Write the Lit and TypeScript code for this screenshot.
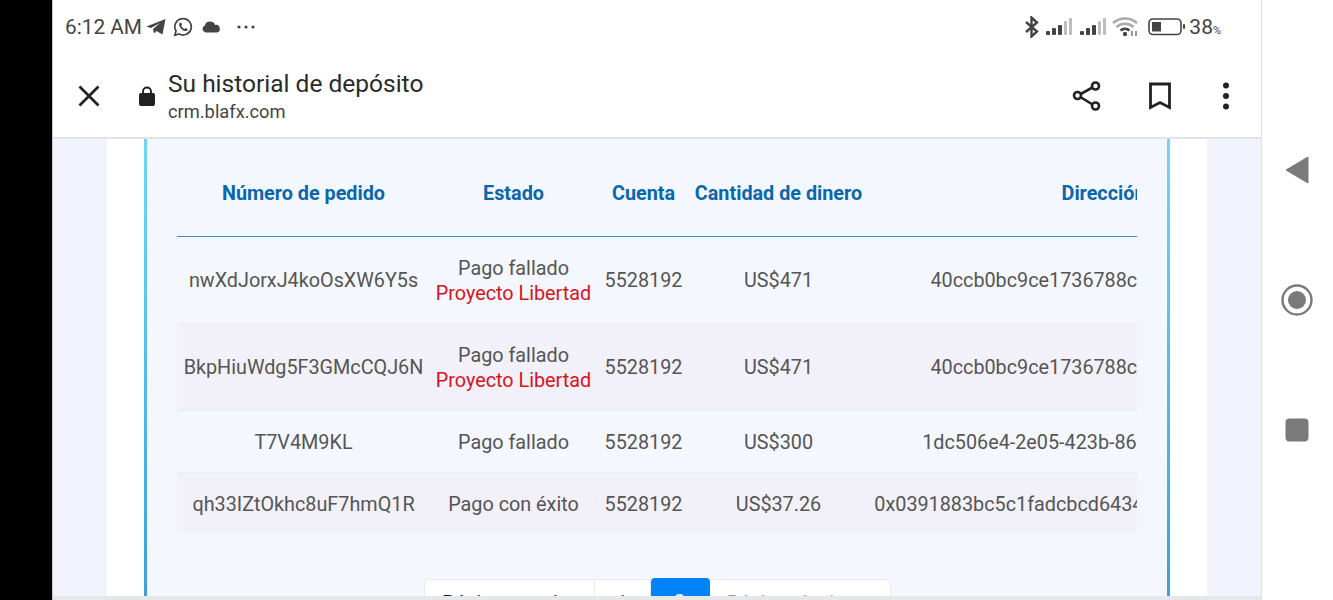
import { LitElement, html, css, svg } from "lit";
import { customElement } from "lit/decorators.js";

const rows = [
  { id: "nwXdJorxJ4koOsXW6Y5s", status: "Pago fallado", note: "Proyecto Libertad", account: "5528192", amount: "US$471", address: "40ccb0bc9ce1736788cfa91e4d27b352", tall: true },
  { id: "BkpHiuWdg5F3GMcCQJ6N", status: "Pago fallado", note: "Proyecto Libertad", account: "5528192", amount: "US$471", address: "40ccb0bc9ce1736788cfa91e4d27b352", tall: true },
  { id: "T7V4M9KL", status: "Pago fallado", note: "", account: "5528192", amount: "US$300", address: "1dc506e4-2e05-423b-86a1-7f3f9d20f5b4", tall: false },
  { id: "qh33IZtOkhc8uF7hmQ1R", status: "Pago con éxito", note: "", account: "5528192", amount: "US$37.26", address: "0x0391883bc5c1fadcbcd64343e7a2f19c05d8b6e1f", tall: false },
];

const bars = () => svg`
  <svg width="28" height="20" viewBox="0 0 28 20">
    <rect x="0" y="14" width="4" height="4" rx="1" fill="#444"/>
    <rect x="6" y="11" width="4" height="7" rx="1" fill="#444"/>
    <rect x="12" y="8" width="4" height="10" rx="1" fill="#444"/>
    <rect x="18" y="4" width="3" height="14" rx="1" fill="#bdbdbd"/>
    <rect x="23" y="1" width="3" height="17" rx="1" fill="#bdbdbd"/>
  </svg>`;

@customElement("app-root")
export class AppRoot extends LitElement {
  static styles = css`
    :host {
      display: flex;
      width: 1333px;
      height: 600px;
      overflow: hidden;
      background: #fff;
      font-family: Roboto, "Liberation Sans", sans-serif;
    }
    .bezel {
      width: 52px;
      background: #000;
      flex: none;
    }
    .phone {
      flex: none;
      display: flex;
      flex-direction: column;
      border-right: 1px solid #dfe1e4;
      border-left: 1px solid #c9c9c9;
      box-sizing: border-box;
      width: 1210px;
    }
    .status {
      height: 54px;
      flex: none;
      display: flex;
      align-items: center;
      padding: 0 0 0 12px;
      color: #444;
    }
    .time {
      font-size: 20.8px;
      margin-right: 4px;
    }
    .status svg {
      display: block;
      flex: none;
    }
    .whatsapp {
      margin-left: 7px;
    }
    .cloud {
      margin-left: 8px;
    }
    .dots {
      margin-left: 14px;
    }
    .right {
      margin-left: auto;
      display: flex;
      align-items: center;
      gap: 4px;
      padding-right: 40px;
    }
    .bt {
      margin-right: 2px;
    }
    .signals {
      display: flex;
      gap: 6px;
    }
    .battery {
      margin-left: 4px;
    }
    .pct {
      font-size: 21px;
      display: flex;
      align-items: baseline;
      margin-left: -1px;
    }
    .pct small {
      font-size: 11px;
    }
    .toolbar {
      height: 85px;
      flex: none;
      box-sizing: border-box;
      border-bottom: 2px solid #e2e3e6;
      display: flex;
      align-items: center;
      padding: 0 31px 0 24px;
      color: #222;
    }
    .close {
      margin-right: 37px;
    }
    .title-box {
      margin-left: 12px;
      display: flex;
      flex-direction: column;
      padding-top: 3px;
    }
    .title {
      font-size: 24.5px;
      line-height: 30px;
      color: #2b2b2b;
    }
    .url {
      font-size: 18.3px;
      line-height: 26px;
      color: #444;
    }
    .actions {
      margin-left: auto;
      display: flex;
      align-items: center;
      gap: 46px;
    }
    .bookmark {
      margin-right: 4px;
    }
    .content {
      flex: 1;
      min-height: 0;
      background: #f1f4fd;
      padding: 0 54px;
      overflow: hidden;
      border-bottom: 4px solid #e6e7e8;
    }
    .panel {
      background: #fff;
      height: 100%;
      padding: 0 37px;
      overflow: hidden;
    }
    .card {
      height: 100%;
      box-sizing: border-box;
      background: #f4f8fe;
      border-left: 3px solid;
      border-right: 3px solid;
      border-image: linear-gradient(180deg, #70d8ef, #3f9fdc) 1;
      padding: 11px 30px 0;
      overflow: hidden;
    }
    .scroll {
      width: 960px;
      overflow: hidden;
    }
    table {
      width: 1163px;
      table-layout: fixed;
      border-collapse: collapse;
      font-size: 19.8px;
      color: #555;
      text-align: center;
    }
    .c-id {
      width: 253px;
    }
    .c-status {
      width: 167px;
    }
    .c-account {
      width: 93px;
    }
    .c-amount {
      width: 177px;
    }
    .c-address {
      width: 473px;
    }
    th {
      height: 86px;
      box-sizing: border-box;
      padding: 2px 0 0;
      font-weight: 700;
      color: #0a66ad;
      border-bottom: 1px solid #3f8cb0;
    }
    td {
      box-sizing: border-box;
      padding: 4px 0 0;
      white-space: nowrap;
      overflow: hidden;
      line-height: 24.5px;
    }
    tr.tall td {
      height: 87px;
    }
    tr.short td {
      height: 62px;
    }
    tbody tr {
      border-bottom: 1px solid #e9ecf3;
    }
    tbody tr.short:last-child {
      border-bottom: 0;
    }
    tbody tr.short:last-child td {
      height: 61px;
    }
    tbody tr:nth-child(even) {
      background: #f2f0f9;
    }
    .note {
      color: #d8131d;
    }
    .pager {
      display: flex;
      justify-content: center;
      margin: 46px 0 0;
      font-size: 19.8px;
    }
    .pager span {
      height: 50px;
      box-sizing: border-box;
      display: flex;
      justify-content: center;
      padding-top: 12px;
      background: #fff;
      border: 1px solid #e8eaed;
      border-left-width: 0;
      color: #222;
    }
    .pager span:first-child {
      border-left-width: 1px;
      border-radius: 4px 0 0 4px;
      width: 171px;
    }
    .pager .num {
      width: 56px;
    }
    .pager .active {
      width: 59px;
      margin-top: -1px;
      height: 51px;
      background: #0082f8;
      border-color: #0082f8;
      border-radius: 4px;
      color: #fff;
    }
    .pager .next {
      width: 181px;
      color: #999;
      border-radius: 0 4px 4px 0;
    }
    .nav {
      flex: 1;
      background: #fff;
      display: flex;
      flex-direction: column;
      align-items: center;
      padding: 156px 2px 0 0;
      box-sizing: border-box;
    }
    .nav svg {
      display: block;
    }
    .nav .home {
      margin-top: 100px;
    }
    .nav .recent {
      margin-top: 102px;
    }
  `;

  render() {
    return html`
      <div class="bezel"></div>
      <div class="phone">
        <div class="status">
          <span class="time">6:12 AM</span>
          <svg width="20" height="18" viewBox="0 0 20 18">
            <path d="M19.5 1 L16.5 16.5 L10.5 13 L8 15.5 L7 11 L14 5 L5 10 L0.5 8.5 Z" fill="#444"/>
          </svg>
          <svg class="whatsapp" width="20" height="20" viewBox="0 0 20 20">
            <path d="M10 1.6 A8.2 8.2 0 0 0 3 14 L1.8 18.2 L6.2 17 A8.2 8.2 0 1 0 10 1.6 Z" fill="none" stroke="#444" stroke-width="1.7"/>
            <path d="M7 5.8 C5.8 7 5.9 9 7.5 11 C9.3 13.3 11.5 14.5 13.2 14 C14.3 13.7 14.8 12.8 14.7 12 L12.6 11 L11.6 12 C10.2 11.5 8.9 10.2 8.2 8.7 L9.1 7.7 L8.2 5.6 Z" fill="#444"/>
          </svg>
          <svg class="cloud" width="20" height="14" viewBox="0 0 20 14">
            <path d="M4.5 12.5 A3.6 3.6 0 0 1 3.8 5.6 A5.5 5.5 0 0 1 14.2 5 A3.8 3.8 0 0 1 15.8 12.5 Z" fill="#444"/>
          </svg>
          <svg class="dots" width="22" height="6" viewBox="0 0 22 6">
            <circle cx="4" cy="3" r="1.6" fill="#444"/><circle cx="11" cy="3" r="1.6" fill="#444"/><circle cx="18" cy="3" r="1.6" fill="#444"/>
          </svg>
          <div class="right">
            <svg class="bt" width="16" height="22" viewBox="0 0 16 22">
              <path d="M2 6 L13 15.5 L7.5 20.5 V1.5 L13 6.5 L2 16" fill="none" stroke="#444" stroke-width="2.4"/>
            </svg>
            <div class="signals">${bars()}${bars()}</div>
            <svg width="28" height="22" viewBox="0 0 28 22">
              <path d="M1 7 A18 18 0 0 1 25 7" fill="none" stroke="#aaa" stroke-width="2.5"/>
              <path d="M4.5 11 A13 13 0 0 1 21.5 11" fill="none" stroke="#aaa" stroke-width="2.5"/>
              <path d="M8.5 14.5 A7 7 0 0 1 17.5 14.5" fill="none" stroke="#444" stroke-width="2.5"/>
              <circle cx="13" cy="18" r="2.2" fill="#444"/>
              <path d="M20 15 V20 M24 20 V15" stroke="#666" stroke-width="1.4"/>
            </svg>
            <svg class="battery" width="38" height="18" viewBox="0 0 38 18">
              <rect x="1" y="1" width="32" height="15.5" rx="4" fill="none" stroke="#444" stroke-width="1.6"/>
              <path d="M4 4 H13 V13.5 H4 Z" fill="#444"/>
              <rect x="35" y="6" width="2" height="5" rx="1" fill="#444"/>
            </svg>
            <span class="pct">38<small>%</small></span>
          </div>
        </div>
        <div class="toolbar">
          <svg class="close" width="24" height="24" viewBox="0 0 24 24">
            <path d="M2.5 2.5 L21.5 21.5 M21.5 2.5 L2.5 21.5" stroke="#222" stroke-width="2.8" fill="none"/>
          </svg>
          <svg width="18" height="22" viewBox="0 0 18 22">
            <path d="M5 9 V6.5 A4 4 0 0 1 13 6.5 V9" fill="none" stroke="#222" stroke-width="1.9"/>
            <rect x="1" y="8" width="16" height="13" rx="2" fill="#222"/>
          </svg>
          <div class="title-box">
            <span class="title">Su historial de depósito</span>
            <span class="url">crm.blafx.com</span>
          </div>
          <div class="actions">
            <svg width="30" height="32" viewBox="0 0 30 32">
              <path d="M23 6 L6 15.5 L23 26" fill="none" stroke="#222" stroke-width="2.6"/>
              <circle cx="23.5" cy="6" r="3.5" fill="#fff" stroke="#222" stroke-width="2.6"/>
              <circle cx="5.5" cy="15.5" r="3.5" fill="#fff" stroke="#222" stroke-width="2.6"/>
              <circle cx="23.5" cy="26" r="3.5" fill="#fff" stroke="#222" stroke-width="2.6"/>
            </svg>
            <svg class="bookmark" width="24" height="28" viewBox="0 0 24 28">
              <path d="M2.5 2 H21.5 V25.5 L12 20.5 L2.5 25.5 Z" fill="none" stroke="#222" stroke-width="2.8"/>
            </svg>
            <svg width="8" height="28" viewBox="0 0 8 28">
              <circle cx="4" cy="3.5" r="3" fill="#222"/><circle cx="4" cy="14" r="3" fill="#222"/><circle cx="4" cy="24.5" r="3" fill="#222"/>
            </svg>
          </div>
        </div>
        <div class="content">
          <div class="panel">
            <div class="card">
              <div class="scroll">
                <table>
                  <colgroup>
                    <col class="c-id" /><col class="c-status" /><col class="c-account" /><col class="c-amount" /><col class="c-address" />
                  </colgroup>
                  <thead>
                    <tr>
                      <th>Número de pedido</th><th>Estado</th><th>Cuenta</th><th>Cantidad de dinero</th><th>Dirección</th>
                    </tr>
                  </thead>
                  <tbody>
                    ${rows.map(
                      (r) => html`
                        <tr class=${r.tall ? "tall" : "short"}>
                          <td>${r.id}</td>
                          <td>${r.status}${r.note ? html`<div class="note">${r.note}</div>` : ""}</td>
                          <td>${r.account}</td>
                          <td>${r.amount}</td>
                          <td>${r.address}</td>
                        </tr>
                      `
                    )}
                  </tbody>
                </table>
              </div>
              <div class="pager">
                <span>Página anterior</span>
                <span class="num">1</span>
                <span class="active">2</span>
                <span class="next">Página siguiente</span>
              </div>
            </div>
          </div>
        </div>
      </div>
      <div class="nav">
        <svg width="24" height="28" viewBox="0 0 24 28">
          <path d="M23 1 V27 L1 14 Z" fill="#7a7a7a" stroke="#7a7a7a" stroke-linejoin="round"/>
        </svg>
        <svg class="home" width="32" height="32" viewBox="0 0 32 32">
          <circle cx="16" cy="16" r="14.5" fill="none" stroke="#7a7a7a" stroke-width="2.4"/>
          <circle cx="16" cy="16" r="9" fill="#7a7a7a"/>
        </svg>
        <svg class="recent" width="24" height="24" viewBox="0 0 24 24">
          <rect x="0.5" y="0.5" width="23" height="23" rx="4" fill="#7a7a7a"/>
        </svg>
      </div>
    `;
  }
}
